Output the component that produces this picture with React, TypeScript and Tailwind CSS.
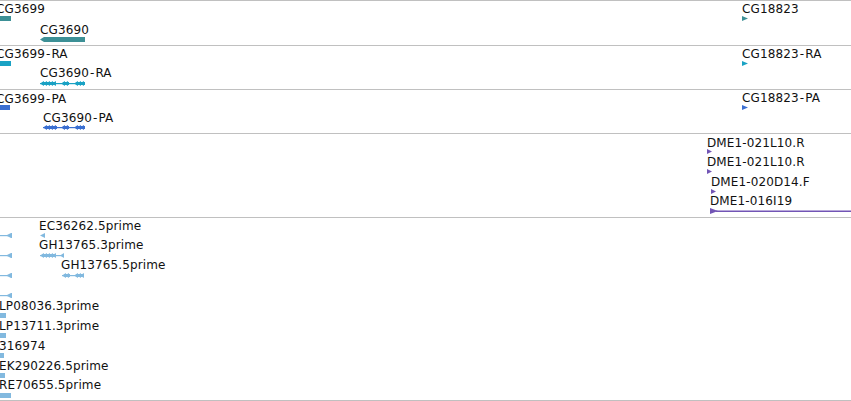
import React from "react";

type Label = { text: string; x: number; y: number };
type Track = {
  top: number;
  height: number;
  labels: Label[];
  shapes: React.ReactNode;
};

// left-pointing arrowhead with its tip at x
const leftArrow = (x: number, y: number, w: number, h: number, fill: string, key: string) => (
  <polygon key={key} points={`${x},${y + h / 2} ${x + w},${y} ${x + w},${y + h}`} fill={fill} />
);

// right-pointing flag
const rightArrow = (x: number, y: number, w: number, h: number, fill: string, key: string) => (
  <polygon key={key} points={`${x},${y} ${x + w},${y + h / 2} ${x},${y + h}`} fill={fill} />
);

// chain of exon arrowheads joined by an intron line
function chevrons(groups: number[][], y: number, x0: number, x1: number, fill: string, k: string) {
  const out: React.ReactNode[] = [
    <rect key={k + "l"} x={x0} y={y + 2} width={x1 - x0} height={1.2} fill={fill} />,
  ];
  groups.forEach(([a, b], gi) => {
    out.push(<rect key={k + "r" + gi} x={a + 2} y={y + 1} width={b - a - 2} height={3} fill={fill} />);
    for (let x = a; x < b - 2; x += 3) out.push(leftArrow(x, y, 4, 5, fill, k + gi + "-" + x));
  });
  return out;
}

const teal = "#3d9096";
const cyan = "#1aa2c4";
const blue = "#3b6fd1";
const purple = "#7255b5";
const sky = "#82b9df";

const tracks: Track[] = [
  {
    top: 0,
    height: 45,
    labels: [
      { text: "CG3699", x: -4, y: 2 },
      { text: "CG3690", x: 40, y: 23 },
      { text: "CG18823", x: 742, y: 2 },
    ],
    shapes: [
      <rect key="a" x={0} y={16} width={11} height={5} fill={teal} />,
      <polygon key="b" points="40,39.5 44,37 85,37 85,42 44,42" fill={teal} />,
      rightArrow(742, 16, 6, 5, teal, "c"),
    ],
  },
  {
    top: 45,
    height: 44,
    labels: [
      { text: "CG3699-RA", x: -4, y: 47 },
      { text: "CG3690-RA", x: 40, y: 66 },
      { text: "CG18823-RA", x: 742, y: 47 },
    ],
    shapes: [
      <rect key="a" x={0} y={61} width={11} height={5} fill={cyan} />,
      ...chevrons([[40, 56], [61, 69], [74, 85]], 81, 40, 85, cyan, "b"),
      rightArrow(742, 61, 6, 5, cyan, "c"),
    ],
  },
  {
    top: 89,
    height: 44,
    labels: [
      { text: "CG3699-PA", x: -4, y: 92 },
      { text: "CG3690-PA", x: 43, y: 111 },
      { text: "CG18823-PA", x: 742, y: 91 },
    ],
    shapes: [
      <rect key="a" x={0} y={105} width={10} height={5} fill={blue} />,
      ...chevrons([[43, 57], [61, 69], [74, 85]], 125, 43, 85, blue, "b"),
      rightArrow(742, 105, 6, 5, blue, "c"),
    ],
  },
  {
    top: 133,
    height: 84,
    labels: [
      { text: "DME1-021L10.R", x: 707, y: 136 },
      { text: "DME1-021L10.R", x: 707, y: 155 },
      { text: "DME1-020D14.F", x: 711, y: 175 },
      { text: "DME1-016I19", x: 710, y: 194 },
    ],
    shapes: [
      rightArrow(707, 149, 5, 5, purple, "a"),
      rightArrow(707, 169, 5, 5, purple, "b"),
      rightArrow(711, 189, 5, 5, purple, "c"),
      rightArrow(710, 208, 8, 6, purple, "d"),
      <rect key="e" x={716} y={210.5} width={135} height={1.5} fill={purple} />,
    ],
  },
  {
    top: 217,
    height: 184,
    labels: [
      { text: "EC36262.5prime", x: 39, y: 219 },
      { text: "GH13765.3prime", x: 39, y: 238 },
      { text: "GH13765.5prime", x: 61, y: 258 },
      { text: "LP08036.3prime", x: -1, y: 299 },
      { text: "LP13711.3prime", x: -1, y: 319 },
      { text: "316974", x: -1, y: 339 },
      { text: "EK290226.5prime", x: -1, y: 359 },
      { text: "RE70655.5prime", x: -1, y: 378 },
    ],
    shapes: [
      ...[233, 253, 273, 293].flatMap((y, i) => [
        <rect key={"ln" + i} x={0} y={y + 2} width={8} height={1.2} fill={sky} />,
        <polygon key={"ar" + i} points={`6,${y + 2.5} 11,${y} 12,${y} 12,${y + 5} 11,${y + 5}`} fill={sky} />,
      ]),
      leftArrow(40, 233, 5, 5, sky, "ec"),
      ...chevrons([[40, 56], [60, 64]], 253, 40, 64, sky, "gh3"),
      ...chevrons([[62, 70], [74, 84]], 273, 62, 84, sky, "gh5"),
      <rect key="p1" x={0} y={313} width={6} height={5} fill={sky} />,
      <rect key="p2" x={0} y={333} width={6} height={5} fill={sky} />,
      <rect key="p3" x={0} y={353} width={4} height={5} fill={sky} />,
      <rect key="p4" x={0} y={373} width={5} height={5} fill={sky} />,
      <rect key="p5" x={0} y={393} width={11} height={5} fill={sky} />,
    ],
  },
];

function LabelText({ text }: { text: string }) {
  const i = text.indexOf("-", 4);
  if (i < 0 || text.startsWith("DME")) return <>{text}</>;
  return (
    <>
      {text.slice(0, i)}
      <span className="mx-px">-</span>
      {text.slice(i + 1)}
    </>
  );
}

export default function App() {
  return (
    <div className="w-[851px] h-[401px] bg-white overflow-hidden font-['DejaVu_Sans',sans-serif] text-[12px] leading-[14px] tracking-[0.12px] text-[#111]">
      {tracks.map((t, ti) => (
        <div
          key={ti}
          className={`relative w-full border-t border-[#c0c0c0] ${ti === tracks.length - 1 ? "border-b" : ""}`}
          style={{ height: t.height }}
        >
          <svg
            className="absolute left-0 top-[-1px]"
            width={851}
            height={t.height}
            viewBox={`0 ${t.top} 851 ${t.height}`}
          >
            {t.shapes}
          </svg>
          {t.labels.map((l, li) => (
            <span
              key={li}
              className="absolute whitespace-nowrap"
              style={{ left: l.x, top: l.y - t.top - 1 }}
            >
              <LabelText text={l.text} />
            </span>
          ))}
        </div>
      ))}
    </div>
  );
}
